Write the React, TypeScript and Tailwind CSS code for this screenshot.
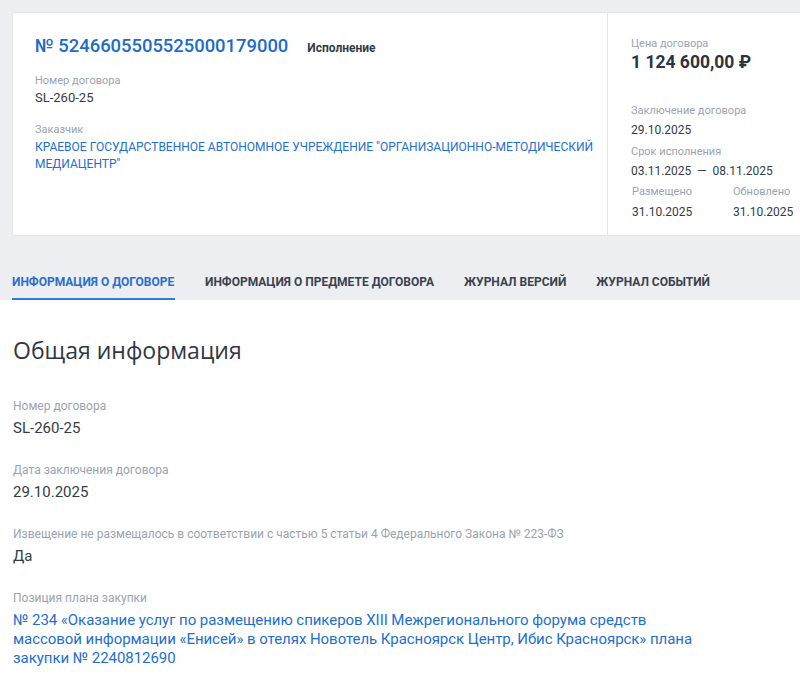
const roboto = "font-['Roboto',sans-serif]";

function Field({ label, value, blue }: { label: string; value: React.ReactNode; blue?: boolean }) {
  return (
    <div className="mb-[24px]">
      <div className="text-[12px] leading-[16px] text-[#9aa3b1]">{label}</div>
      <div className={`mt-[5px] text-[15px] leading-[19px] ${blue ? "text-[#1e6fd0]" : "text-[#333b48]"}`}>{value}</div>
    </div>
  );
}

export default function App() {
  return (
    <div className={`${roboto} w-[800px] h-[684px] overflow-hidden bg-white`}>
      <div className="bg-[#eceef1] pt-[12px] pl-[12px]">
        <div className="flex h-[224px] bg-white border border-[#e3e6ea] border-r-0">
          <div className="flex-1 pl-[22px] pt-[20px]">
            <div className="flex items-baseline">
              <span className="text-[18.4px] leading-[26px] font-medium text-[#1e6bc9]">№ 5246605505525000179000</span>
              <span className="ml-[19px] text-[12px] font-bold text-[#333b48]">Исполнение</span>
            </div>
            <div className="mt-[15px] text-[11px] leading-[14px] text-[#9aa3b1]">Номер договора</div>
            <div className="mt-[1px] text-[13px] leading-[17px] text-[#333b48]">SL-260-25</div>
            <div className="mt-[17px] text-[11px] leading-[14px] text-[#9aa3b1]">Заказчик</div>
            <div className="mt-[2px] text-[12px] leading-[17px] text-[#1e6fd0]">
              КРАЕВОЕ ГОСУДАРСТВЕННОЕ АВТОНОМНОЕ УЧРЕЖДЕНИЕ "ОРГАНИЗАЦИОННО-МЕТОДИЧЕСКИЙ МЕДИАЦЕНТР"
            </div>
          </div>
          <div className="w-[193px] border-l border-[#e3e6ea] pl-[23px] pt-[24px]">
            <div className="text-[11px] leading-[14px] text-[#9aa3b1]">Цена договора</div>
            <div className="text-[17.5px] leading-[22px] font-bold text-[#2d3440]">1 124 600,00 ₽</div>
            <div className="mt-[31px] text-[11px] leading-[14px] text-[#9aa3b1]">Заключение договора</div>
            <div className="mt-[4px] text-[12px] leading-[16px] text-[#333b48]">29.10.2025</div>
            <div className="mt-[7px] text-[11px] leading-[14px] text-[#9aa3b1]">Срок исполнения</div>
            <div className="mt-[4px] text-[12px] leading-[16px] text-[#333b48]">03.11.2025 &nbsp;—&nbsp; 08.11.2025</div>
            <div className="mt-[6px] flex">
              <div className="w-[102px] pl-[1px]">
                <div className="text-[11px] leading-[14px] text-[#9aa3b1]">Размещено</div>
                <div className="mt-[5px] text-[12px] leading-[16px] text-[#333b48]">31.10.2025</div>
              </div>
              <div>
                <div className="text-[11px] leading-[14px] text-[#9aa3b1]">Обновлено</div>
                <div className="mt-[5px] text-[12px] leading-[16px] text-[#333b48]">31.10.2025</div>
              </div>
            </div>
          </div>
        </div>
        <div className="flex h-[64px] items-end gap-[30px] text-[12px] font-bold">
          <div className="w-[163px] border-b-[2px] border-[#2a7de1] pb-[7px] text-[#2a6fce]">ИНФОРМАЦИЯ О ДОГОВОРЕ</div>
          <div className="pb-[9px] text-[#3a4250]">ИНФОРМАЦИЯ О ПРЕДМЕТЕ ДОГОВОРА</div>
          <div className="pb-[9px] text-[#3a4250]">ЖУРНАЛ ВЕРСИЙ</div>
          <div className="pb-[9px] text-[#3a4250]">ЖУРНАЛ СОБЫТИЙ</div>
        </div>
      </div>
      <div className="px-[13px] pt-[35px]">
        <h1 className="font-['Open_Sans',sans-serif] text-[23px] leading-[30px] text-[#2f3744]">Общая информация</h1>
        <div className="mt-[33px]">
          <Field label="Номер договора" value="SL-260-25" />
          <Field label="Дата заключения договора" value="29.10.2025" />
          <Field
            label="Извещение не размещалось в соответствии с частью 5 статьи 4 Федерального Закона № 223-ФЗ"
            value="Да"
          />
          <Field
            label="Позиция плана закупки"
            blue
            value={
              <div className="w-[690px] tracking-[-0.05px]">
                № 234 «Оказание услуг по размещению спикеров XIII Межрегионального форума средств массовой информации «Енисей» в отелях Новотель Красноярск Центр, Ибис Красноярск» плана закупки № 2240812690
              </div>
            }
          />
        </div>
      </div>
    </div>
  );
}
